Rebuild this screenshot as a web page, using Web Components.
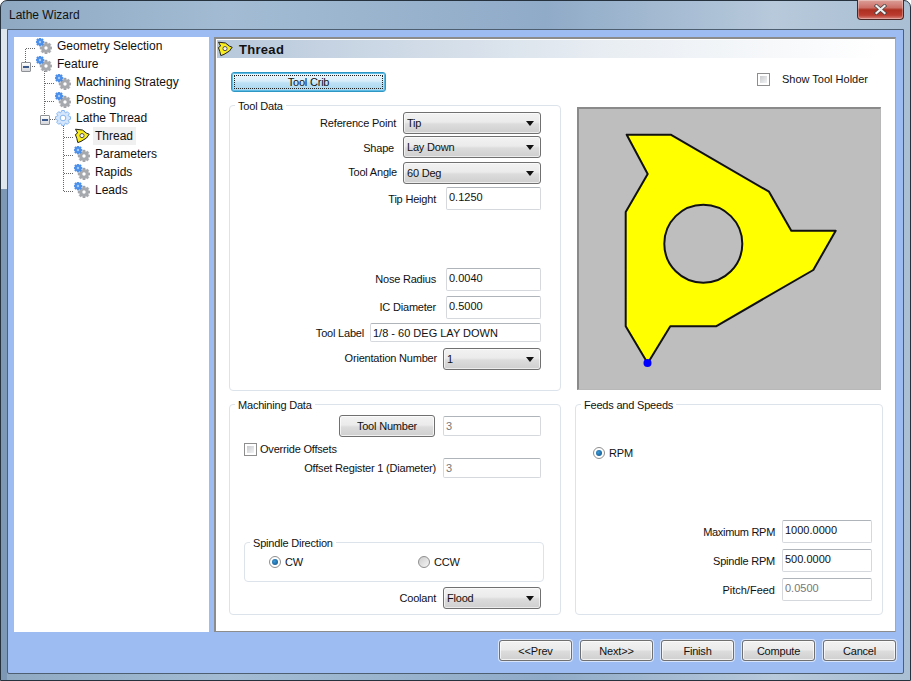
<!DOCTYPE html>
<html><head><meta charset="utf-8"><style>
html,body{margin:0;padding:0;background:#fff;overflow:hidden}
body{font:12px "Liberation Sans",Arial,sans-serif;color:#111}
</style></head><body>
<lw-window title="Lathe Wizard">
  <lw-tree slot="tree"></lw-tree>
  <lw-panel slot="panel" heading="Thread">
    <div slot="a" style="display:flex;padding:14px 0 0 2px">
      <lw-btn focus w="155" h="20">Tool Crib</lw-btn>
    </div>
    <div slot="b" style="display:flex;align-items:center;height:14px;margin:14px 0 0 182px;gap:12px">
      <lw-check></lw-check><span style="letter-spacing:0">Show Tool Holder</span>
    </div>
    <lw-group slot="c" label="Tool Data" h="286" pad="6">
      <lw-row mt="0" label="Reference Point" lr="145" lo="0"><lw-select w="138" value="Tip"></lw-select></lw-row>
      <lw-row mt="2" label="Shape" lr="147" lo="1"><lw-select w="138" value="Lay Down"></lw-select></lw-row>
      <lw-row mt="4" label="Tool Angle" lr="144" lo="-1"><lw-select w="138" value="60 Deg"></lw-select></lw-row>
      <lw-row mt="3" label="Tip Height" lr="105" lo="0"><lw-input w="95" h="23" value="0.1250"></lw-input></lw-row>
      <lw-row mt="58" label="Nose Radius" lr="105" lo="-1"><lw-input w="95" h="23" value="0.0040"></lw-input></lw-row>
      <lw-row mt="5" label="IC Diameter" lr="105" lo="-1"><lw-input w="95" h="23" value="0.5000"></lw-input></lw-row>
      <lw-row mt="4" label="Tool Label" lr="177" lo="0"><lw-input w="171" h="19" value="1/8 - 60 DEG LAY DOWN"></lw-input></lw-row>
      <lw-row mt="6" label="Orientation Number" lr="104" lo="-1"><lw-select w="98" value="1"></lw-select></lw-row>
    </lw-group>
    <lw-preview slot="d"></lw-preview>
    <lw-group slot="e" label="Machining Data" h="211" pad="10">
      <lw-row mt="0" lr="106"><lw-btn w="96" h="22" style="margin-right:8px">Tool Number</lw-btn><lw-input w="98" h="20" value="3" dis></lw-input></lw-row>
      <div style="display:flex;align-items:center;gap:3px;height:14px;margin:5px 0 0 14px"><lw-check></lw-check><span>Override Offsets</span></div>
      <lw-row mt="2" label="Offset Register 1 (Diameter)" lr="105"><lw-input w="98" h="20" value="3" dis></lw-input></lw-row>
      <lw-group label="Spindle Direction" h="40" w="300" style="margin:64px 0 0 14px">
        <div style="display:flex;padding:12px 0 0 24px">
          <lw-radio on style="width:149px">CW</lw-radio><lw-radio>CCW</lw-radio>
        </div>
      </lw-group>
      <lw-row mt="5" label="Coolant" lr="105"><lw-select w="98" value="Flood"></lw-select></lw-row>
    </lw-group>
    <lw-group slot="f" label="Feeds and Speeds" h="211" pad="41">
      <div style="padding-left:17px"><lw-radio on>RPM</lw-radio></div>
      <lw-row mt="60" label="Maximum RPM" lr="97" rp="10" ls="-.3"><lw-input w="90" h="23" value="1000.0000"></lw-input></lw-row>
      <lw-row mt="6" label="Spindle RPM" lr="97" rp="10"><lw-input w="90" h="23" value="500.0000"></lw-input></lw-row>
      <lw-row mt="6" label="Pitch/Feed" lr="97" rp="10" ls="0"><lw-input w="90" h="23" value="0.0500" dis></lw-input></lw-row>
    </lw-group>
  </lw-panel>
  <lw-btn slot="foot" w="73" h="21">&lt;&lt;Prev</lw-btn>
  <lw-btn slot="foot" w="73" h="21">Next&gt;&gt;</lw-btn>
  <lw-btn slot="foot" w="73" h="21">Finish</lw-btn>
  <lw-btn slot="foot" w="73" h="21">Compute</lw-btn>
  <lw-btn slot="foot" w="73" h="21">Cancel</lw-btn>
</lw-window>
<script>
const FONT='"Liberation Sans",Arial,sans-serif';
function def(name,render){customElements.define(name,class extends HTMLElement{
  connectedCallback(){ if(this.shadowRoot)return; const s=this.attachShadow({mode:'open'}); s.innerHTML=render(this); }
});}
function gear(cx,cy,ro,ri,n){let d='';for(let i=0;i<n;i++){const a=i/n*Math.PI*2,w=Math.PI/n;
  const p=[[ri,a-w*.9],[ro,a-w*.45],[ro,a+w*.45],[ri,a+w*.9]];
  p.forEach(([r,t],j)=>{d+=(i===0&&j===0?'M':'L')+(cx+r*Math.cos(t)).toFixed(2)+' '+(cy+r*Math.sin(t)).toFixed(2)});}
  return d+'Z';}
const SHAPE="M626.7 134.7H670.7L769 191.7L791.3 230.7H835.7L813.3 270L716 326.3H670.3L647.7 363.3L625.7 326.3V212L647.7 174Z";
def('lw-icon',h=>{
  const k=h.getAttribute('kind');
  let inner='';
  if(k==='gears')inner=`
    <path d="${gear(10,10,6,4.2,8)}" fill="#a6a9ae" stroke="#94979c" stroke-width=".4"/><circle cx="10" cy="10" r="1.7" fill="#fff"/>
    <path d="${gear(4,4,4.2,3,8)}" fill="#4a90ec" stroke="#3478dc" stroke-width=".3"/><circle cx="4" cy="4" r="1.2" fill="#a8ccf7"/>`;
  if(k==='gear')inner=`
    <path d="${gear(8,8,7.6,5.8,8)}" fill="#d4e6fc" stroke="#86b6f0" stroke-width="1"/><circle cx="8" cy="8" r="2.8" fill="#fff" stroke="#86b6f0"/>`;
  if(k==='thread')inner=`
    <path d="M1.5 1.2L8.5 2L12.5 5.2L15.2 6.2L12.5 10L7 13.4L3.8 14.6L2.8 10.5L1.4 6.6L3.6 5Z" fill="#f8ec1e" stroke="#222" stroke-width="1" stroke-linejoin="round"/>
    <circle cx="8" cy="7.6" r="2.1" fill="#f4f4f4" stroke="#555" stroke-width="1"/>`;
  return `<style>:host{display:block;width:16px;height:16px;flex:none}svg{display:block}</style><svg width="16" height="16" viewBox="0 0 16 16">${inner}</svg>`;
});
def('lw-window',h=>`<style>
:host{display:flex;flex-direction:column;width:911px;height:681px;box-sizing:border-box;border-radius:7px 7px 0 0;border:1px solid #26333f;
 background:
  linear-gradient(#dfe7ee 0 160px,#7d98b5 160px) 0 28px/6px 100% no-repeat,
  linear-gradient(90deg,#8fa9c3 0,#a3bcd4 25%,#90abc8 60%,#b7c9db 85%,#aabfd3 100%)}
.tb{display:flex;justify-content:space-between;height:28px;flex:none;padding:0 6px 0 8px;font-size:12px;color:#111}
.t{line-height:28px}
.x{width:47px;height:20px;margin-top:-1px;border:1px solid #4a2624;border-top:0;border-radius:0 0 4px 4px;box-sizing:border-box;
 background:linear-gradient(#dc9f98 0,#cc7067 40%,#ad2f20 52%,#bb3c30 80%,#d8857c 100%);display:flex;align-items:center;justify-content:center;box-shadow:inset 0 0 0 1px rgba(255,255,255,.3)}
.main{flex:1;margin:0 6px 6px 6px;background:#9dbcf1;border:1px solid #4f5f72;border-radius:0 0 2px 2px;display:flex;flex-direction:column;padding:7px 7px 0 6px;min-height:0;box-sizing:border-box}
.top{display:flex;gap:5px;height:595px;flex:none}
.foot{display:flex;justify-content:flex-end;gap:8px;margin-top:8px}
</style>
<div class="tb"><div class="t">${h.getAttribute('title')}</div>
<div class="x"><svg width="13" height="11" viewBox="0 0 13 11"><path d="M2.5 2L10.5 9M10.5 2L2.5 9" stroke="#444" stroke-width="3.6" stroke-linecap="square"/><path d="M2.5 2L10.5 9M10.5 2L2.5 9" stroke="#f0f0f0" stroke-width="2.2" stroke-linecap="square"/></svg></div></div>
<div class="main"><div class="top"><slot name="tree"></slot><slot name="panel"></slot></div><div class="foot"><slot name="foot"></slot></div></div>`);
const TREE=[[0,'gears','Geometry Selection'],[0,'gears','Feature',1],[1,'gears','Machining Strategy'],[1,'gears','Posting'],[1,'gear','Lathe Thread',1],[2,'thread','Thread',0,1],[2,'gears','Parameters'],[2,'gears','Rapids'],[2,'gears','Leads']];
def('lw-tree',h=>`<style>
:host{display:block;width:195px;height:595px;background:#fff;position:relative;flex:none;font-size:12px}
.row{display:flex;align-items:center;height:18px;position:relative}
.ic{margin-left:2px}
.tx{margin-left:3px;padding:0 3px 0 2px;height:18px;line-height:18px;white-space:nowrap}
.sel{background:#f0f0f0}
.lines{position:absolute;left:0;top:0;pointer-events:none}
.box{position:absolute;width:10px;height:10px;border:1px solid #8e9195;background:linear-gradient(#fff,#d4d6da);box-sizing:border-box;border-radius:1px}
.box:after{content:"";position:absolute;left:1px;right:1px;top:3px;height:2px;background:#3d5a8c}
</style>
<svg class="lines" width="120" height="170"><g stroke="#666" stroke-dasharray="1 1" fill="none" shape-rendering="crispEdges">
<path d="M11.5 25V11.5H22M16 29.5H22M30.5 34V78M30.5 46.5H41M30.5 64.5H41M36 82.5H41M49.5 87V154.5M49.5 100.5H60M49.5 118.5H60M49.5 136.5H60M49.5 154.5H60"/></g></svg>
<div class="box" style="left:7px;top:25px"></div><div class="box" style="left:26px;top:78px"></div>
<div class="list">${TREE.map(([l,k,t,_,s])=>`<div class="row" style="padding-left:${20+l*19}px"><lw-icon class="ic" kind="${k}"></lw-icon><span class="tx ${s?'sel':''}">${t}</span></div>`).join('')}</div>`);
def('lw-panel',h=>`<style>
:host{display:block;width:682px;height:595px;box-sizing:border-box;background:#fff;border:1px solid #8c8c8c;border-right-color:#a8a8a8;border-top-width:2px;border-left-width:2px;flex:none;font-size:11px;letter-spacing:-.2px}
.head{margin:1px 16px 0 1px;height:18px;display:flex;align-items:center;gap:6px;background:linear-gradient(90deg,#b7c8db,#e9eef3 60%,#fff)}
.h{font:bold 13px ${FONT};letter-spacing:.3px;color:#111}
.g{display:grid;grid-template-columns:332px 308px;column-gap:14px;padding:0 0 0 13px;grid-template-rows:47px 299px auto}
</style><div class="head"><lw-icon kind="thread"></lw-icon><span class="h">${h.getAttribute('heading')}</span></div>
<div class="g"><slot name="a"></slot><slot name="b"></slot><slot name="c"></slot><slot name="d"></slot><slot name="e"></slot><slot name="f"></slot></div>`);
def('lw-btn',h=>{const w=h.getAttribute('w'),H=h.getAttribute('h'),f=h.hasAttribute('focus');return `<style>
:host{display:block;flex:none;width:${w}px;height:${H}px;font-size:11px;letter-spacing:-.2px}
.b{box-sizing:border-box;width:100%;height:100%;border:1px solid ${f?'#2f97c4':'#707070'};border-radius:3px;display:flex;align-items:center;justify-content:center;position:relative;
 background:${f?'linear-gradient(#eef8fd 0,#d8eefa 45%,#bde1f5 55%,#a9d6f0 100%)':'linear-gradient(#f2f2f2 0,#ebebeb 45%,#dcdcdc 55%,#cfcfcf 100%)'};
 box-shadow:${f?'inset 0 0 0 1px #5fbbe3':'inset 0 0 0 1px rgba(255,255,255,.7)'},0 0 0 1px rgba(255,255,255,.6)}
${f?'.b:after{content:"";position:absolute;inset:2px;border:1px dotted #222}':''}
</style><div class="b"><slot></slot></div>`});
def('lw-row',h=>{const g=h.getAttribute.bind(h);const mt=g('mt')||0,l=g('label'),lr=+g('lr'),lo=+(g('lo')||0),rp=g('rp')||19,ls=g('ls');return `<style>
:host{display:flex;justify-content:flex-end;align-items:center;margin-top:${mt}px;padding-right:${rp}px;position:relative}
.l{position:absolute;right:${lr + +rp}px;white-space:nowrap;top:50%;transform:translateY(calc(-50% + ${lo}px));${ls!==null?`letter-spacing:${ls}px;`:''}}
</style>${l?`<span class="l">${l}</span>`:''}<slot></slot>`});
def('lw-group',h=>{const g=h.getAttribute.bind(h);const W=g('w');const pad=g('pad')||0;return `<style>
:host{display:block;box-sizing:border-box;height:${g('h')}px;${W?`width:${W}px;`:''}border:1px solid #dde3ea;border-radius:4px;position:relative;padding-top:${pad}px}
.lg{position:absolute;left:5px;top:-7px;background:#fff;padding:0 3px;line-height:15px;white-space:nowrap}
</style><span class="lg">${g('label')}</span><slot></slot>`});
def('lw-select',h=>`<style>
:host{display:block;flex:none;width:${h.getAttribute('w')}px;height:22px}
.s{box-sizing:border-box;height:100%;border:1px solid #707070;border-radius:3px;display:flex;align-items:center;justify-content:space-between;padding:0 6px 0 3px;
 background:linear-gradient(#f2f2f2 0,#ebebeb 45%,#dcdcdc 55%,#cfcfcf 100%);box-shadow:inset 0 0 0 1px rgba(255,255,255,.6)}
i{width:0;height:0;border:4.5px solid transparent;border-top:5px solid #111;border-bottom:0}
</style><div class="s"><span>${h.getAttribute('value')}</span><i></i></div>`);
def('lw-input',h=>`<style>
:host{display:block;flex:none;width:${h.getAttribute('w')}px;height:${h.getAttribute('h')}px;letter-spacing:0}
.i{box-sizing:border-box;height:100%;border:1px solid #d5d9de;border-top-color:#aeb4ba;border-radius:2px;padding:3px 2px 0 2px;color:${h.hasAttribute('dis')?'#777':'#111'};white-space:nowrap;overflow:hidden}
</style><div class="i">${h.getAttribute('value')}</div>`);
def('lw-check',h=>`<style>
:host{display:block;flex:none;width:13px;height:13px;box-sizing:border-box;border:1px solid #8e8e8e;background:#fff;padding:2px}
div{height:100%;background:linear-gradient(135deg,#c9cbce,#f2f3f4)}
</style><div></div>`);
def('lw-radio',h=>{const on=h.hasAttribute('on');return `<style>
:host{display:flex;align-items:center;gap:4px;height:14px;box-sizing:border-box;flex:none}
.r{width:12px;height:12px;box-sizing:border-box;border-radius:50%;border:1px solid #8e8e8e;background:${on?'#fff':'linear-gradient(135deg,#ccc,#f6f6f6)'};display:flex;align-items:center;justify-content:center}
.r i{width:6px;height:6px;border-radius:50%;background:radial-gradient(circle at 40% 40%,#3b9ad6,#0b4a82)}
</style><div class="r">${on?'<i></i>':''}</div><slot></slot>`});
def('lw-preview',h=>`<style>
:host{display:block;width:304px;height:283px;margin:2px 0 0 2px;box-sizing:border-box;background:#bebebe;border:2px solid #8a8a8a;border-right-color:#b8b8b8;border-bottom-color:#b8b8b8;border-right-width:1px;border-bottom-width:1px}
svg{display:block}
</style><svg width="301" height="280" viewBox="579 109 301 280"><path d="${SHAPE}" fill="#ff0" stroke="#111" stroke-width="2" stroke-linejoin="round"/>
<circle cx="703.3" cy="243.7" r="39" fill="#bebebe" stroke="#111" stroke-width="2"/><circle cx="647.5" cy="363" r="4" fill="#00f"/></svg>`);
</script>
</body></html>
